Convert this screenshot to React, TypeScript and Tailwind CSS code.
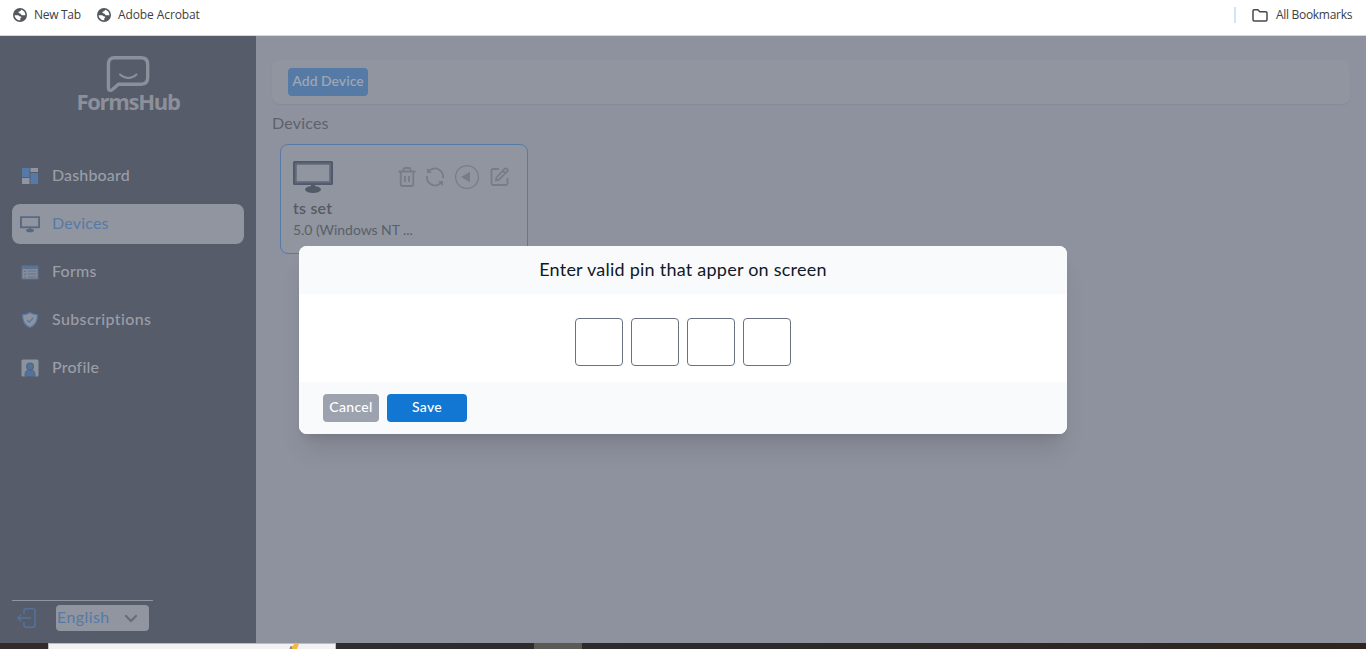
import React from "react";

const Globe = () => (
  <svg className="h-[14px] w-[14px] shrink-0" viewBox="0 0 14 14">
    <circle cx="7" cy="7" r="7" fill="#55585c" />
    <path d="M1.600 7.200h3c1.200 0 1.300.7 2 1 .8.400 1.500 0 1.700.9.100.8-.9.700-1 1.500v1.700C4.300 12.400 1.800 10 1.600 7.200zM8.300 1.800C7.600 2.100 8 3 7 3.300c-1 .2-1.600.300-1.500 1.200.1 1 1.300.8 2 1.200.8.500.6 1.500 1.700 1.500h3.200C12.400 4.400 10.700 2.300 8.300 1.800z" fill="#fff" />
  </svg>
);

const DashboardIcon = () => (
  <svg className="h-5 w-5" viewBox="0 0 20 20">
    <path d="M2 2h7.500v9H2zM10.500 7H18v11h-7.500z" fill="#557aa6" />
    <path d="M10.500 2H18v4h-7.500zM2 12h7.500v6H2z" fill="#9095a0" />
  </svg>
);

const Monitor = ({ className }: { className: string }) => (
  <svg className={className} viewBox="0 0 40 33">
    <path fillRule="evenodd" d="M1.500 0h37q1.500 0 1.500 1.500v21q0 1.500-1.500 1.500h-37q-1.500 0-1.500-1.500v-21Q0 0 1.500 0zM3.500 3.500v17h33v-17z" fill="currentColor" />
    <path d="M2.500 2.500h35v19h-35z" fill="none" stroke="#606a7c" strokeWidth="1.400" />
    <path d="M18 23h4v3.500h-4z" fill="currentColor" />
    <ellipse cx="20" cy="28.500" rx="8" ry="3.500" fill="currentColor" />
  </svg>
);

const FormsIcon = () => (
  <svg className="h-5 w-5" viewBox="0 0 20 20">
    <path d="M1.500 3.500h17v14h-17z" fill="#5c7392" />
    <path d="M2.500 7h15v9.500h-15z" fill="#858d9a" />
    <path d="M4 9l1 1 1.500-2M4 12l1 1 1.500-2M4 15l1 .5 1.500-1.500M8 9h8M8 12h8M8 15h8" fill="none" stroke="#5c6c83" strokeWidth=".7" />
  </svg>
);

const ShieldIcon = () => (
  <svg className="h-5 w-5" viewBox="0 0 20 20">
    <path d="M10 2.500c2 1.500 4.500 2 7.300 2.300.3 6-1.500 10.500-7.300 12.700C4.200 15.300 2.400 10.800 2.700 4.800 5.500 4.500 8 4 10 2.500z" fill="#8c929e" stroke="#557aa6" strokeWidth="1.100" />
    <path d="M7.200 10.200l2 2 4-4.500" fill="none" stroke="#557aa6" strokeWidth="1.300" />
  </svg>
);

const ProfileIcon = () => (
  <svg className="h-5 w-5" viewBox="0 0 20 20">
    <rect x="1.500" y="1.500" width="17" height="17" rx="1.500" fill="#8c929e" />
    <path d="M5 18.500v-2c0-3 2-5 5-5s5 2 5 5v2z" fill="#50739e" stroke="#586579" />
    <circle cx="10" cy="8.500" r="3.400" fill="#50739e" stroke="#586579" strokeWidth="1.200" />
  </svg>
);

const items = [
  { label: "Dashboard", icon: <DashboardIcon />, tracking: "tracking-[0.15px]" },
  { label: "Devices", icon: <Monitor className="h-[17px] w-5 text-[#566983]" />, tracking: "tracking-[0.2px]" },
  { label: "Forms", icon: <FormsIcon />, tracking: "tracking-[0.25px]" },
  { label: "Subscriptions", icon: <ShieldIcon />, tracking: "tracking-[0.38px]" },
  { label: "Profile", icon: <ProfileIcon />, tracking: "tracking-[0.2px]" },
];

const Sidebar = () => (
  <aside className="flex w-64 flex-col bg-[#565c6a]">
    <div className="flex h-[116px] flex-col items-center pt-5 text-[#8c909b]">
      <svg className="h-[37px] w-11 shrink-0" viewBox="0 0 44 37">
        <path d="M8.500 1.800h26.500q6.700 0 6.700 6.700v13q0 6.700-6.700 6.700H12.500l-6 5.300c-2 1.500-4.100 1-4.100-1.500V8.500q0-6.700 6.100-6.700z" fill="none" stroke="currentColor" strokeWidth="3.400" />
        <path d="M14 18.500q8.500 7 16.500 0" fill="none" stroke="currentColor" strokeWidth="2" strokeLinecap="round" />
      </svg>
      <div className="-mt-[6px] font-['Open_Sans',sans-serif] text-[22px] leading-7 font-bold tracking-[-1.3px]">FormsHub</div>
    </div>
    <nav className="flex flex-col gap-2 px-3 pt-1">
      {items.map((item) => (
        <a key={item.label} className={`flex h-10 items-center gap-3 rounded-lg px-2 text-base ${item.label === "Devices" ? "bg-[#9095a0] text-[#557aa6]" : "font-medium text-[#9b9ea7]"}`}>
          {item.icon}
          <span className={`pb-0.5 ${item.tracking}`}>{item.label}</span>
        </a>
      ))}
    </nav>
    <div className="mt-auto ml-3 flex h-[43px] w-[141px] gap-5 border-t border-[#9095a0] pt-1">
      <svg className="mt-[3px] ml-[5px] h-5 w-[19px]" viewBox="0 0 19 20" fill="none" stroke="#50739e" strokeWidth="1.500">
        <path d="M7 6V3q0-2.200 2.200-2.200h6.600Q18 .8 18 3v14q0 2.200-2.200 2.200H9.200Q7 19.200 7 17v-3M14 10H1M4 6.800L1 10l3 3.200" />
      </svg>
      <div className="flex h-[26px] w-[93px] items-center justify-between rounded bg-[#9095a0] pr-[11px] pl-px text-[#557aa6]">
        <span className="pb-0.5 tracking-[0.4px]">English</span>
        <svg className="h-[9px] w-[14px]" viewBox="0 0 14 9"><path d="M2 2l5 5 5-5" fill="none" stroke="#676d7b" strokeWidth="2.200" strokeLinecap="round" strokeLinejoin="round" /></svg>
      </div>
    </div>
  </aside>
);

const DeviceActions = () => (
  <div className="flex items-center text-[#787c85]">
    <svg className="h-5 w-[18px]" viewBox="0 0 18 20" fill="none" stroke="currentColor" strokeWidth="1.800">
      <path d="M.5 4.500h17M5.500 4V2.500Q5.500 1 7 1h4q1.500 0 1.500 1.500V4M2.700 5v12q0 2 2 2h8.600q2 0 2-2V5M7 9v6M11 9v6" />
    </svg>
    <svg className="ml-[9px] h-5 w-5" viewBox="0 0 20 20" fill="none" stroke="currentColor" strokeWidth="1.800">
      <path d="M18 11A8.200 8.200 0 0 0 5 3.200L3 5M2 9a8.200 8.200 0 0 0 13 7.800l2-1.800" />
      <path d="M2 1v5h5zM18 19v-5h-5z" fill="currentColor" stroke="none" />
    </svg>
    <svg className="ml-[10px] h-6 w-6" viewBox="0 0 24 24">
      <circle cx="12" cy="12" r="11.400" fill="none" stroke="currentColor" strokeWidth="1.200" />
      <path d="M6 12l9-5.200v10.400z" fill="currentColor" />
    </svg>
    <svg className="ml-[11px] h-5 w-5" viewBox="0 0 20 20" fill="none" stroke="currentColor" strokeWidth="1.800">
      <path d="M9 2H3Q1.500 2 1.500 3.500v13Q1.500 18 3 18h13q1.500 0 1.500-1.500V11M6.500 10.500l8-8.500q1.200-1.200 2.500 0 1.300 1.200.2 2.500l-8.500 8.300-2.700.5zM12.800 3.800l2.500 2.500" />
    </svg>
  </div>
);

const MainPanel = () => (
  <main className="flex flex-1 flex-col bg-[#8e929e] px-4 pt-6">
    <div className="flex h-11 items-center rounded-lg bg-[#9095a0] px-4 shadow-[0_1px_2px_rgba(0,0,0,0.06)]">
      <button className="h-7 w-20 rounded bg-[#557aa6] pb-0.5 text-sm font-semibold whitespace-nowrap text-[#9da6b3]">Add Device</button>
    </div>
    <h1 className="mt-[7px] text-base leading-6 tracking-[0.2px] text-[#5d616c]">Devices</h1>
    <section className="mt-[9px] ml-2 h-[110px] w-[248px] rounded-lg border border-[#557aa6] bg-[#9095a0] px-3 pt-4">
      <div className="flex h-8 items-center justify-between pr-[5px]">
        <Monitor className="h-[33px] w-10 text-[#525968]" />
        <DeviceActions />
      </div>
      <div className="mt-[3px] text-base leading-6 font-semibold tracking-[0.2px] text-[#565a63]">ts set</div>
      <div className="text-sm leading-5 tracking-[-0.05px] text-[#5b5f69]">5.0 (Windows NT ...</div>
    </section>
  </main>
);

const PinModal = () => (
  <div role="dialog" className="absolute top-[246px] left-[299px] flex h-[188px] w-[768px] flex-col overflow-hidden rounded-lg bg-white shadow-xl">
    <header className="flex h-12 items-center justify-center bg-gray-50 pb-0.5 text-lg tracking-[0.24px] text-gray-900">Enter valid pin that apper on screen</header>
    <div className="flex h-[88px] items-center justify-center gap-2 pt-2">
      {[0, 1, 2, 3].map((n) => (
        <input key={n} aria-label={`Digit ${n + 1}`} className="h-12 w-12 rounded border border-gray-500 bg-white" />
      ))}
    </div>
    <footer className="flex h-[52px] items-center gap-2 bg-gray-50 px-6 text-sm font-medium text-white">
      <button className="h-7 w-14 rounded bg-[#9ca3af] pb-0.5 tracking-[0.3px]">Cancel</button>
      <button className="h-7 w-20 rounded bg-[#1177d3] pb-0.5 tracking-[0.3px]">Save</button>
    </footer>
  </div>
);

export default function App() {
  return (
    <div className="relative flex h-[649px] w-[1366px] flex-col overflow-hidden bg-white font-['Lato',sans-serif]">
      <header className="flex h-9 items-center border-b border-[#d5d7db] px-[13px] pb-[5px] font-['Open_Sans',sans-serif] text-xs text-[#3c4043]">
        <Globe />
        <span className="ml-[7px] w-[45px] tracking-[-0.3px] whitespace-nowrap">New Tab</span>
        <span className="ml-[18px] flex"><Globe /></span>
        <span className="ml-[7px] tracking-[-0.1px] whitespace-nowrap">Adobe Acrobat</span>
        <span className="mr-4 ml-auto h-4 w-[2px] bg-[#d3e3fd]" />
        <svg className="h-[13px] w-4" viewBox="0 0 16 13"><path d="M1 2q0-1.200 1.200-1.200h3.600l2 2h6q1.200 0 1.200 1.200v6.800q0 1.200-1.200 1.200H2.200Q1 12 1 10.800z" fill="none" stroke="#45484c" strokeWidth="1.500" /></svg>
        <span className="ml-2 w-[77px] tracking-[-0.3px] whitespace-nowrap">All Bookmarks</span>
      </header>
      <div className="flex h-[607px] shrink-0"><Sidebar /><MainPanel /></div>
      <div className="flex h-[6px] shrink-0 bg-gradient-to-r from-[#30302f] via-[#2b2b2c] to-[#30251f]">
        <div className="w-12 bg-[#332b2a]" />
        <div className="flex w-72 border border-b-0 border-[#bcbcbc] bg-[#f2f2f2]">
          <svg className="ml-[240px] h-[5px] w-[10px]" viewBox="0 0 10 5"><path d="M0 5l2-3h2l1-2h5L8 5z" fill="#efb943" /><path d="M1 3l1-1 1 1v2H1z" fill="#8b8792" /></svg>
        </div>
        <div className="ml-[198px] w-12 bg-[#5b5a54]" />
      </div>
      <PinModal />
    </div>
  );
}
